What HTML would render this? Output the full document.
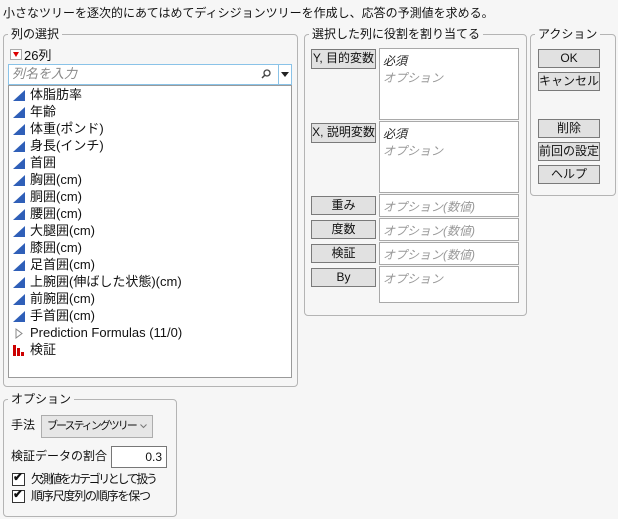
<!DOCTYPE html>
<html><head><meta charset="utf-8"><style>
*{box-sizing:border-box;margin:0;padding:0}
body{width:618px;height:519px;background:#f6f6f6;font-family:"Liberation Sans","Noto Sans CJK JP",sans-serif;font-size:12px;color:#111;position:relative;overflow:hidden}
.a{position:absolute;white-space:nowrap}
.g{position:absolute;border:1px solid #b4b4b4;border-radius:4px}
.lg{position:absolute;background:#f6f6f6;padding:0 3px;top:-9px;left:4px;line-height:16px;font-size:12px}
.btn{position:absolute;background:#e1e1e1;border:1px solid #7a7a7a;text-align:center;line-height:17px;font-size:12px}
.box{position:absolute;background:#fff;border:1px solid #a9a9a9}
.it{font-style:italic;color:#999}
.req{font-style:italic;color:#222}
.chk{position:absolute;width:13px;height:13px;border:1px solid #333;background:#fff}
.li{font-size:13px;line-height:16px}
</style></head><body>
<div class="a" style="left:3px;top:5px;line-height:16px">小さなツリーを逐次的にあてはめてディシジョンツリーを作成し、応答の予測値を求める。</div>

<div class="g" style="left:3px;top:34px;width:295px;height:353px"><div class="lg">列の選択</div></div>
<div class="a" style="left:10px;top:49px;width:12px;height:11px;border:1px solid #aaa;background:#fff"><div style="position:absolute;left:2px;top:2px;width:0;height:0;border-left:3.5px solid transparent;border-right:3.5px solid transparent;border-top:5px solid #d00"></div></div>
<div class="a" style="left:24px;top:48px;line-height:16px;font-size:13px">26列</div>
<div class="a" style="left:8px;top:64px;width:284px;height:21px;border:1px solid #8ac3e8;background:#fff"></div>
<div class="a it" style="left:12px;top:66px;line-height:16px;color:#888;font-size:13px">列名を入力</div>
<svg class="a" style="left:261px;top:69px" width="10" height="10"><circle cx="6" cy="4" r="3" fill="none" stroke="#444" stroke-width="1.3"/><line x1="4" y1="6" x2="1" y2="9" stroke="#444" stroke-width="1.5"/></svg>
<div class="a" style="left:278px;top:65px;width:1px;height:19px;background:#8ac3e8"></div>
<div class="a" style="left:281px;top:72px;width:0;height:0;border-left:4px solid transparent;border-right:4px solid transparent;border-top:5px solid #222"></div>
<div class="box" style="left:8px;top:85px;width:284px;height:293px;border-color:#9a9a9a"></div>
<div id="list"></div>

<div class="g" style="left:304px;top:34px;width:223px;height:282px"><div class="lg">選択した列に役割を割り当てる</div></div>
<div class="btn" style="left:311px;top:49px;width:65px;height:20px">Y, 目的変数</div>
<div class="box" style="left:379px;top:48px;width:140px;height:72px"></div>
<div class="a req" style="left:383px;top:52px">必須</div>
<div class="a it" style="left:383px;top:69px">オプション</div>
<div class="btn" style="left:311px;top:123px;width:65px;height:20px">X, 説明変数</div>
<div class="box" style="left:379px;top:121px;width:140px;height:72px"></div>
<div class="a req" style="left:383px;top:125px">必須</div>
<div class="a it" style="left:383px;top:142px">オプション</div>
<div class="btn" style="left:311px;top:196px;width:65px;height:19px">重み</div>
<div class="box" style="left:379px;top:194px;width:140px;height:23px"></div>
<div class="a it" style="left:383px;top:198px">オプション(数値)</div>
<div class="btn" style="left:311px;top:220px;width:65px;height:19px">度数</div>
<div class="box" style="left:379px;top:218px;width:140px;height:23px"></div>
<div class="a it" style="left:383px;top:222px">オプション(数値)</div>
<div class="btn" style="left:311px;top:244px;width:65px;height:19px">検証</div>
<div class="box" style="left:379px;top:242px;width:140px;height:23px"></div>
<div class="a it" style="left:383px;top:246px">オプション(数値)</div>
<div class="btn" style="left:311px;top:268px;width:65px;height:19px">By</div>
<div class="box" style="left:379px;top:266px;width:140px;height:37px"></div>
<div class="a it" style="left:383px;top:270px">オプション</div>

<div class="g" style="left:530px;top:34px;width:86px;height:162px"><div class="lg">アクション</div></div>
<div class="btn" style="left:538px;top:49px;width:62px;height:19px">OK</div>
<div class="btn" style="left:538px;top:72px;width:62px;height:19px">キャンセル</div>
<div class="btn" style="left:538px;top:119px;width:62px;height:19px">削除</div>
<div class="btn" style="left:538px;top:142px;width:62px;height:19px">前回の設定</div>
<div class="btn" style="left:538px;top:165px;width:62px;height:19px">ヘルプ</div>

<div class="g" style="left:3px;top:399px;width:174px;height:118px"><div class="lg">オプション</div></div>
<div class="a" style="left:11px;top:417px;line-height:16px">手法</div>
<div class="a" style="left:41px;top:415px;width:112px;height:23px;border:1px solid #adadad;background:#e6e6e6"></div>
<div class="a" style="left:47px;top:419px;line-height:14px;font-size:11px;letter-spacing:-2px">ブースティングツリー</div>
<svg class="a" style="left:140px;top:424px" width="7" height="5"><polyline points="0.5,0.5 3.5,3.5 6.5,0.5" fill="none" stroke="#777"/></svg>
<div class="a" style="left:11px;top:448px;line-height:16px">検証データの割合</div>
<div class="a" style="left:111px;top:446px;width:56px;height:22px;border:1px solid #777;background:#fff;text-align:right;padding-right:4px;line-height:20px">0.3</div>
<div class="chk" style="left:12px;top:473px"></div>
<div class="a" style="left:13px;top:470px;font-size:12px;font-weight:bold">✔</div>
<div class="a" style="left:31px;top:471px;line-height:16px;letter-spacing:-2.4px">欠測値をカテゴリとして扱う</div>
<div class="chk" style="left:12px;top:490px"></div>
<div class="a" style="left:13px;top:487px;font-size:12px;font-weight:bold">✔</div>
<div class="a" style="left:31px;top:488px;line-height:16px;letter-spacing:-1.2px">順序尺度列の順序を保つ</div>

<script>
var items=["体脂肪率","年齢","体重(ポンド)","身長(インチ)","首囲","胸囲(cm)","胴囲(cm)","腰囲(cm)","大腿囲(cm)","膝囲(cm)","足首囲(cm)","上腕囲(伸ばした状態)(cm)","前腕囲(cm)","手首囲(cm)"];
var h="";
items.forEach(function(t,i){var y=87+i*17;
h+='<svg class="a" style="left:13px;top:'+(y+3)+'px" width="12" height="11"><polygon points="0,11 12,0 12,11" fill="#2f5fb8"/></svg>';
h+='<div class="a li" style="left:30px;top:'+y+'px">'+t+'</div>';});
var y=87+14*17;
h+='<svg class="a" style="left:15px;top:'+(y+3)+'px" width="8" height="11"><polygon points="1,1 7,5.5 1,10" fill="none" stroke="#888"/></svg>';
h+='<div class="a li" style="left:30px;top:'+y+'px">Prediction Formulas (11/0)</div>';
y+=17;
h+='<svg class="a" style="left:13px;top:'+(y+2)+'px" width="12" height="12"><rect x="0" y="1" width="3" height="11" fill="#c00"/><rect x="4" y="4" width="3" height="8" fill="#c00"/><rect x="8" y="8" width="3" height="4" fill="#c00"/></svg>';
h+='<div class="a li" style="left:30px;top:'+y+'px">検証</div>';
document.getElementById("list").innerHTML=h;
</script>
</body></html>
